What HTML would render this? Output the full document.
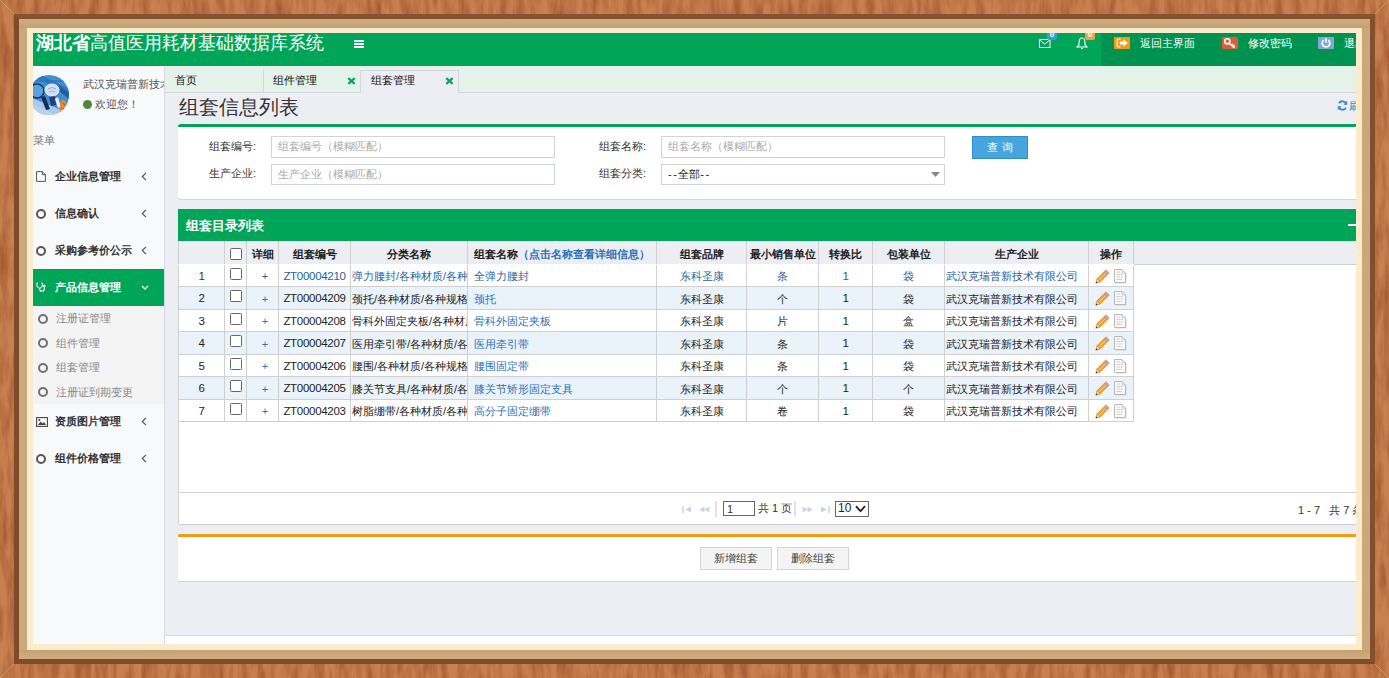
<!DOCTYPE html>
<html><head><meta charset="utf-8">
<style>
*{box-sizing:border-box;margin:0;padding:0}
html,body{width:1389px;height:678px;overflow:hidden}
body{font-family:"Liberation Sans",sans-serif;font-size:11px;color:#333;position:relative;background:#b8744a;}
.wood{position:absolute;left:0;top:0;width:1389px;height:678px;background:#bd7549}
.bev{position:absolute;left:14px;top:14px;width:1361px;height:650px;background:#88532f;}
.bev:before{content:"";position:absolute;left:0;top:0;right:0;bottom:0;
border-top:5px solid #87522f;border-left:5px solid #7f4b2a;border-right:5px solid #82502d;border-bottom:5px solid #804d2b}
.tan{position:absolute;left:19px;top:19px;width:1351px;height:640px;background:#cba87b;}
.tan:before{content:"";position:absolute;left:0;top:0;width:100%;height:9px;background:linear-gradient(#cfad80,#c4a274)}
.tan:after{content:"";position:absolute;left:0;bottom:0;width:100%;height:9px;background:linear-gradient(#c4a274,#cfae82)}
.cream{position:absolute;left:27px;top:28px;width:1335px;height:622px;background:#f9ebcc;}
.app{position:absolute;left:33px;top:33px;width:1323px;height:611px;overflow:hidden;background:#eceef3}
.abs{position:absolute}
.hdtxt{position:absolute;color:#fff;font-size:11px;line-height:13px;white-space:nowrap;margin-top:1px}
.mi{position:absolute;left:0;width:131px;height:37px;line-height:37px;white-space:nowrap;color:#333}
.mi b{position:absolute;left:22px;top:0;font-size:11px}
.mi .chev{position:absolute;left:108px;top:0;font-style:normal;font-size:13px;color:#555}
.mi.act{background:#00a557;color:#fff}
.mi.act .chev{color:#fff}
.ic{position:absolute;left:4px;top:13px;width:10px;height:11px}
.circ{left:3px;top:14px;width:10px;height:10px;border:2px solid #555;border-radius:50%}
.smi{position:absolute;left:0;width:131px;height:24.5px;line-height:24.5px;white-space:nowrap;color:#888;font-size:11px;padding-left:23px}
.smi .sc{position:absolute;left:5px;top:7.5px;width:10px;height:10px;border:2px solid #707070;border-radius:50%}
.tab{position:absolute;top:36px;height:22px;line-height:22px;font-size:11px;color:#111;white-space:nowrap}
.tx{position:absolute;top:0;width:8px;height:22px}
.lbl{position:absolute;font-size:11px;color:#333;line-height:13px;white-space:nowrap}
.inp{position:absolute;height:22px;border:1px solid #cfd4dc;background:#fff;font-size:11px;color:#aaa;line-height:20px;padding-left:6px;white-space:nowrap}

.grid{border-collapse:collapse;table-layout:fixed;font-size:11px;color:#222}
.grid td{border:1px solid #d0d0d0;height:22px;padding:1px 5px 0 5px;white-space:nowrap;overflow:hidden;position:relative;line-height:20px}
.grid tr.th td{height:23px;font-weight:bold;background:#eceef3;border-top:none;border-bottom:1px solid #fff;color:#222;padding-top:3px;box-shadow:inset 0 1px 0 #fbf7fb}
.grid td.c{text-align:center;padding-left:0;padding-right:0}
.grid td.l2{padding-left:1px;padding-right:0}
.grid td.lk0{padding-left:6px}
.grid tr.alt td{background:#eaf2fa;height:23px}
.grid td.lk{color:#2d72b8;padding-left:6px}
.grid tr.hov td{color:#1f5f9f}
.grid tr.hov td.dk{color:#333}
.grid td.lat{font-size:11.5px;letter-spacing:-0.3px;padding-top:0}
.grid td.plus{color:#2d72b8;font-size:11px;padding-left:5px}
.cb{position:absolute;left:5px;top:3px;width:12px;height:12px;border:1.5px solid #666;background:#fff;border-radius:1.5px}
.btn{width:72px;height:23px;border:1px solid #d5d5d5;background:#f4f4f4;color:#444;font-size:11px;line-height:21px;text-align:center;white-space:nowrap}
</style></head>
<body>
<svg class="wood" width="1389" height="678" viewBox="0 0 1389 678"><filter id="wf" x="0" y="0" width="100%" height="100%" color-interpolation-filters="sRGB"><feTurbulence type="fractalNoise" baseFrequency="0.12 0.025" numOctaves="4" seed="3"/><feColorMatrix type="matrix" values="0 0 0 0 0.6  0 0 0 0 0.3  0 0 0 0 0.14  1.5 0 0 0 -0.55"/></filter><rect width="1389" height="678" fill="#c78050"/><rect width="1389" height="678" filter="url(#wf)"/><path d="M0 0 L14 14 M1389 0 L1375 14 M0 678 L14 664 M1389 678 L1375 664" stroke="#e0a878" stroke-width="1" opacity="0.6"/></svg>
<div class="bev"></div>
<div class="tan"></div>
<div class="cream"></div>
<div class="app">
 <!-- header -->
 <div class="abs" style="left:0;top:0;width:1323px;height:33px;background:#00a557"></div>
 <div class="abs" style="left:1068px;top:0;width:255px;height:33px;background:#00934f"></div>
 <div class="abs" style="left:3px;top:0px;height:33px;line-height:20px;font-size:18px;color:#fff;white-space:nowrap"><b>湖北省</b>高值医用耗材基础数据库系统</div>
 <div class="abs" style="left:321px;top:7px;width:10px;height:2px;background:#fff;box-shadow:0 3px 0 #fff,0 6px 0 #fff"></div>
 <svg class="abs" style="left:1005px;top:5px" width="14" height="12" viewBox="0 0 14 12"><rect x="1.5" y="1.5" width="10.5" height="8" fill="none" stroke="#fff" stroke-width="1"/><path d="M1.8 2 L6.75 6.2 L11.7 2" fill="none" stroke="#fff" stroke-width="1"/></svg>
 <div class="abs" style="left:1014px;top:-2px;width:10px;height:9px;background:#3c9ad7;border-radius:2px;color:#fff;font-size:8px;line-height:8px;text-align:center;font-weight:bold">0</div>
 <svg class="abs" style="left:1043px;top:4px" width="12" height="13" viewBox="0 0 12 13"><path d="M6 1 C3.5 1 3 3.5 3 6 L3 8 L1 10 L11 10 L9 8 L9 6 C9 3.5 8.5 1 6 1 Z" fill="none" stroke="#fff" stroke-width="1.1"/><path d="M4.8 11 L6 12.4 L7.2 11Z" fill="#fff"/></svg>
 <div class="abs" style="left:1052px;top:-2px;width:10px;height:9px;background:#e8a744;border-radius:2px;color:#fff;font-size:8px;line-height:8px;text-align:center;font-weight:bold">0</div>
 <div class="abs" style="left:1081px;top:4px;width:16px;height:12px;background:#f39c12;border-radius:1px"><svg class="abs" style="left:2px;top:1px" width="13" height="10" viewBox="0 0 13 10"><path d="M4.5 1.2 H2.6 C1.6 1.2 1.2 1.8 1.2 2.6 V7.4 C1.2 8.2 1.6 8.8 2.6 8.8 H4.5" fill="none" stroke="#eee" stroke-width="1.3"/><path d="M3.8 3.6 H7.3 V1.2 L11.8 5 L7.3 8.8 V6.4 H3.8Z" fill="#fff"/></svg></div>
 <div class="hdtxt" style="left:1107px;top:3px">返回主界面</div>
 <div class="abs" style="left:1189px;top:4px;width:16px;height:12px;background:#d9603b;border-radius:1px"><svg class="abs" style="left:1px;top:0px" width="14" height="12" viewBox="0 0 14 12"><circle cx="4.3" cy="4.3" r="2.6" fill="none" stroke="#fff" stroke-width="1.6"/><path d="M6.2 6.2 L11.5 11 M8.6 8.4 L10 7 M10.2 9.8 L11.6 8.4" fill="none" stroke="#fff" stroke-width="1.5"/><path d="M10 8 L12 10" stroke="#f3d46a" stroke-width="1"/></svg></div>
 <div class="hdtxt" style="left:1215px;top:3px">修改密码</div>
 <div class="abs" style="left:1285px;top:4px;width:16px;height:12px;background:#86a8d6;border-radius:1px"><svg class="abs" style="left:2px;top:0px" width="12" height="12" viewBox="0 0 12 12"><path d="M3.6 3.2 A3.8 3.8 0 1 0 8.4 3.2" fill="none" stroke="#fff" stroke-width="1.7"/><path d="M6 1.2 V5.6" stroke="#fff" stroke-width="1.7"/></svg></div>
 <div class="hdtxt" style="left:1311px;top:3px">退出</div>

 <!-- sidebar -->
 <div class="abs" style="left:0;top:33px;width:132px;height:578px;background:#f8f9fb;border-right:1px solid #d5d9e2"></div>
 <svg class="abs" style="left:-4px;top:42px" width="40" height="40" viewBox="0 0 40 40"><defs><clipPath id="avc"><circle cx="20" cy="20" r="20"/></clipPath></defs><g clip-path="url(#avc)">
 <rect width="40" height="40" fill="#3f8fd2"/>
 <path d="M0 22 L40 38 L40 40 L0 40Z" fill="#a9c9ea"/>
 <path d="M0 28 L28 40 L0 40Z" fill="#b8d3ee"/>
 <path d="M12 0 L40 14 L40 22 L22 10 L8 4Z" fill="#2f78bf"/>
 <path d="M30 10 L40 18 L40 24 L30 16Z" fill="#1f5f9e"/>
 <circle cx="8" cy="16" r="7" fill="#5aa2dc" stroke="#173a66" stroke-width="1.5"/>
 <path d="M6 6 L40 6" stroke="#2c6fb1" stroke-width="1"/>
 <ellipse cx="23" cy="15" rx="7" ry="6" fill="#cfe0f2" stroke="#eef5fb" stroke-width="1"/>
 <path d="M19 14 Q23 11 27 14 M20 17 Q23 15 26 17" stroke="#8fb4dc" stroke-width="1" fill="none"/>
 <path d="M12 22 L16 21 L21 34 L17 35Z" fill="#1b2a4d"/>
 <path d="M20 22 L26 21 L27 30 L22 31Z" fill="#2a3d78"/>
 <path d="M26 24 L29 22 L32 32 L29 33Z" fill="#e6eef8"/>
 <path d="M33 25 Q38 24 37 32 Q35 38 31 37 Q30 30 33 25Z" fill="#e88b2e"/>
 <path d="M34 28 L36 30 M33 33 L35 34" stroke="#d0502a" stroke-width="1.2"/>
</g></svg>
 <div class="abs" style="left:0;top:33px;width:131px;height:100px;overflow:hidden">
  <div class="abs" style="left:50px;top:12px;font-size:11px;color:#555;white-space:nowrap;line-height:13px">武汉克瑞普新技术有限公司</div>
 </div>
 <div class="abs" style="left:50px;top:67px;width:9px;height:9px;border-radius:50%;background:#4b8a3c"></div>
 <div class="abs" style="left:62px;top:65px;font-size:11px;color:#555;white-space:nowrap;line-height:13px">欢迎您！</div>
 <div class="abs" style="left:0;top:101px;font-size:11px;color:#777;line-height:13px">菜单</div>

 <div class="mi" style="top:125px"><svg class="ic" style="left:3px;top:12.5px" viewBox="0 0 10 11"><path d="M0.6 0.6 H6.3 L9.4 3.7 V10.4 H0.6 Z M6.3 0.6 V3.7 H9.4" fill="none" stroke="#555" stroke-width="1"/></svg><b>企业信息管理</b><svg class="abs" style="left:108px;top:14px" width="6" height="9" viewBox="0 0 6 9"><path d="M5 0.8 L1.3 4.5 L5 8.2" fill="none" stroke="#555" stroke-width="1.2"/></svg></div>
 <div class="mi" style="top:162px"><span class="ic circ"></span><b>信息确认</b><svg class="abs" style="left:108px;top:14px" width="6" height="9" viewBox="0 0 6 9"><path d="M5 0.8 L1.3 4.5 L5 8.2" fill="none" stroke="#555" stroke-width="1.2"/></svg></div>
 <div class="mi" style="top:199px"><span class="ic circ"></span><b>采购参考价公示</b><svg class="abs" style="left:108px;top:14px" width="6" height="9" viewBox="0 0 6 9"><path d="M5 0.8 L1.3 4.5 L5 8.2" fill="none" stroke="#555" stroke-width="1.2"/></svg></div>
 <div class="mi act" style="top:236px"><svg class="ic" style="left:3px;top:13px;width:10px;height:10px" viewBox="0 0 10 10"><path d="M1.8 0.7 Q0.5 1 0.7 3 Q1.1 5.6 3.6 6.4 Q6.1 5.6 6.5 3 Q6.7 1 5.4 0.7" fill="none" stroke="#fff" stroke-width="1.1"/><path d="M3.6 6.4 Q3.7 9.4 6 9.4 Q8.3 9.4 8.3 6.6 V5" fill="none" stroke="#fff" stroke-width="1.1"/><circle cx="8.3" cy="4" r="1.2" fill="#fff"/></svg><b>产品信息管理</b><svg class="abs" style="left:108px;top:16px" width="8" height="6" viewBox="0 0 8 6"><path d="M1 1 L4 4 L7 1" fill="none" stroke="#fff" stroke-width="1.3"/></svg></div>
 <div class="abs" style="left:0;top:273px;width:131px;height:98px;background:#f4f4f5"></div>
 <div class="smi" style="top:273px"><span class="sc"></span>注册证管理</div>
 <div class="smi" style="top:297.5px"><span class="sc"></span>组件管理</div>
 <div class="smi" style="top:322px"><span class="sc"></span>组套管理</div>
 <div class="smi" style="top:346.5px"><span class="sc"></span>注册证到期变更</div>
 <div class="mi" style="top:370px"><svg class="ic" style="width:12px;height:10px;top:14px;left:3px" viewBox="0 0 12 10"><rect x="0.6" y="0.6" width="10.8" height="8.8" fill="none" stroke="#444" stroke-width="1.1"/><path d="M2 8 L4.5 4.5 L6.5 6.5 L8 5 L10 8 Z" fill="#444"/><circle cx="3.3" cy="3" r="1" fill="#444"/></svg><b>资质图片管理</b><svg class="abs" style="left:108px;top:14px" width="6" height="9" viewBox="0 0 6 9"><path d="M5 0.8 L1.3 4.5 L5 8.2" fill="none" stroke="#555" stroke-width="1.2"/></svg></div>
 <div class="mi" style="top:407px"><span class="ic circ"></span><b>组件价格管理</b><svg class="abs" style="left:108px;top:14px" width="6" height="9" viewBox="0 0 6 9"><path d="M5 0.8 L1.3 4.5 L5 8.2" fill="none" stroke="#555" stroke-width="1.2"/></svg></div>

 <!-- tabs -->
 <div class="abs" style="left:132px;top:33px;width:1191px;height:27px;background:#e5f2ea;border-bottom:1px solid #d3d8df"></div>
 <div class="abs" style="left:230px;top:37px;width:1px;height:22px;background:#d3d8df"></div>
 <div class="abs" style="left:327px;top:37px;width:99px;height:23px;background:#eceef3;border:1px solid #d3d8df;border-bottom:none"></div>
 <div class="tab" style="left:142px">首页</div>
 <div class="tab" style="left:240px">组件管理</div>
 <svg class="abs" style="left:314px;top:44px" width="9" height="8" viewBox="0 0 9 8"><path d="M1.3 1.1 L7.7 6.9 M7.7 1.1 L1.3 6.9" stroke="#0aa55a" stroke-width="2.2"/></svg>
 <div class="tab" style="left:338px">组套管理</div>
 <svg class="abs" style="left:412px;top:44px" width="9" height="8" viewBox="0 0 9 8"><path d="M1.3 1.1 L7.7 6.9 M7.7 1.1 L1.3 6.9" stroke="#0aa55a" stroke-width="2.2"/></svg>

 <!-- title -->
 <div class="abs" style="left:146px;top:61.5px;font-size:20px;line-height:24px;color:#333;white-space:nowrap">组套信息列表</div>
 <svg class="abs" style="left:1304px;top:67px" width="11" height="11" viewBox="0 0 11 11"><path d="M9.3 4.2 A4 4 0 0 0 2 3.2 M1.7 6.8 A4 4 0 0 0 9 7.8" fill="none" stroke="#3c8dbc" stroke-width="1.8"/><path d="M10.2 0.8 V4.8 H6.4Z M0.8 10.2 V6.2 H4.6Z" fill="#3c8dbc"/></svg>
 <div class="abs" style="left:1316px;top:67px;font-size:11px;line-height:13px;color:#3c8dbc;white-space:nowrap">刷新</div>

 <!-- search box -->
 <div class="abs" style="left:145px;top:91px;width:1200px;height:75px;background:#fff;border-top:3px solid #00a557;border-radius:3px;box-shadow:0 1px 1px rgba(0,0,0,0.12)"></div>
 <div class="lbl" style="left:176px;top:107px">组套编号:</div>
 <div class="inp" style="left:238px;top:103px;width:284px;line-height:19px">组套编号（模糊匹配）</div>
 <div class="lbl" style="left:176px;top:134px">生产企业:</div>
 <div class="inp" style="left:238px;top:131px;width:284px;height:21px;line-height:18px">生产企业（模糊匹配）</div>
 <div class="lbl" style="left:566px;top:107px">组套名称:</div>
 <div class="inp" style="left:628px;top:103px;width:284px;height:22px;line-height:19px">组套名称（模糊匹配）</div>
 <div class="lbl" style="left:566px;top:134px">组套分类:</div>
 <div class="inp" style="left:628px;top:131px;width:284px;height:21px;line-height:18px;color:#222"><span style="letter-spacing:1.5px">--</span>全部<span style="letter-spacing:1.5px">--</span></div>
 <svg class="abs" style="left:898px;top:139px" width="9" height="6" viewBox="0 0 9 6"><path d="M0 0 H9 L4.5 5Z" fill="#888"/></svg>
 <div class="abs" style="left:939px;top:103px;width:56px;height:23px;background:#45a5dc;border:1px solid #2f8dcb;color:#fff;font-size:11px;line-height:20px;text-align:center;white-space:nowrap">查 询</div>

 <!-- table panel -->
 <div class="abs" style="left:145px;top:176px;width:1200px;height:315px;background:#fff;border-left:1px solid #d2d2d2"></div>
 <div class="abs" style="left:145px;top:176px;width:1200px;height:32px;background:#00a557"></div>
 <div class="abs" style="left:153px;top:185px;font-size:13px;line-height:16px;color:#fff;font-weight:bold;white-space:nowrap">组套目录列表</div>
 <div class="abs" style="left:1315px;top:191px;width:9px;height:2px;background:#fff"></div>
 <div class="abs" style="left:146px;top:208px;width:1200px;height:24px;background:#eceef3;border-bottom:1px solid #cfcfcf"></div>

 <table class="grid" style="position:absolute;left:145px;top:208px;width:955px">
 <colgroup><col style="width:46px"><col style="width:22px"><col style="width:32px"><col style="width:72px"><col style="width:117px"><col style="width:189px"><col style="width:90px"><col style="width:72px"><col style="width:54px"><col style="width:72px"><col style="width:144px"><col style="width:45px"></colgroup>
 <tr class="th"><td></td><td class="c"><span class="cb" style="top:7px"></span></td><td class="c">详细</td><td class="c">组套编号</td><td class="c">分类名称</td><td class="lk0">组套名称<span style="color:#2d72b8">（点击名称查看详细信息）</span></td><td class="c">组套品牌</td><td class="c">最小销售单位</td><td class="c">转换比</td><td class="c">包装单位</td><td class="c">生产企业</td><td class="c">操作</td></tr>
 <tr class="hov"><td class="c dk lat">1</td><td class="c"><span class="cb"></span></td><td class="c plus">+</td><td class="c lat">ZT00004210</td><td class="l2">弹力腰封/各种材质/各种规格</td><td class="lk">全弹力腰封</td><td class="c">东科圣康</td><td class="c">条</td><td class="c lat">1</td><td class="c">袋</td><td class="l2">武汉克瑞普新技术有限公司</td><td class="op"><svg width="15" height="15" viewBox="0 0 15 15" style="position:absolute;left:6px;top:4px"><path d="M11 0.8 L14.2 4 L5 13.2 L1.8 10Z" fill="#f2a635" stroke="#d08418" stroke-width="0.7"/><path d="M3.4 11.6 L12.6 2.4" stroke="#f8c870" stroke-width="0.9"/><path d="M11 0.8 L14.2 4 L12.9 5.3 L9.7 2.1Z" fill="#e58fbf"/><path d="M9.7 2.1 L12.9 5.3 L12 6.2 L8.8 3Z" fill="#a9a9a9"/><path d="M1.8 10 L5 13.2 L0.8 14.2Z" fill="#f3d9a8" stroke="#b57c30" stroke-width="0.5"/><path d="M0.8 14.2 L1.3 12.3 L2.7 13.7Z" fill="#333"/></svg><svg width="13" height="15" viewBox="0 0 13 15" style="position:absolute;left:25px;top:4px"><path d="M1.5 1.5 H9 L12.5 5 V14.5 H1.5Z" fill="#d8d8d8"/><path d="M0.5 0.5 H8 L11.5 4 V13.5 H0.5Z" fill="#fbfbfb" stroke="#b8b8b8" stroke-width="1"/><path d="M8 0.5 V4 H11.5" fill="none" stroke="#c0c0c0" stroke-width="0.8"/><path d="M2.5 3 H6 M2.5 5.5 H9 M2.5 8 H9 M2.5 10.5 H8" stroke="#bcbcbc" stroke-width="0.9" stroke-dasharray="1.6 0.7"/></svg></td></tr><tr class="alt"><td class="c dk lat">2</td><td class="c"><span class="cb"></span></td><td class="c plus">+</td><td class="c lat">ZT00004209</td><td class="l2">颈托/各种材质/各种规格</td><td class="lk">颈托</td><td class="c">东科圣康</td><td class="c">个</td><td class="c lat">1</td><td class="c">袋</td><td class="l2">武汉克瑞普新技术有限公司</td><td class="op"><svg width="15" height="15" viewBox="0 0 15 15" style="position:absolute;left:6px;top:4px"><path d="M11 0.8 L14.2 4 L5 13.2 L1.8 10Z" fill="#f2a635" stroke="#d08418" stroke-width="0.7"/><path d="M3.4 11.6 L12.6 2.4" stroke="#f8c870" stroke-width="0.9"/><path d="M11 0.8 L14.2 4 L12.9 5.3 L9.7 2.1Z" fill="#e58fbf"/><path d="M9.7 2.1 L12.9 5.3 L12 6.2 L8.8 3Z" fill="#a9a9a9"/><path d="M1.8 10 L5 13.2 L0.8 14.2Z" fill="#f3d9a8" stroke="#b57c30" stroke-width="0.5"/><path d="M0.8 14.2 L1.3 12.3 L2.7 13.7Z" fill="#333"/></svg><svg width="13" height="15" viewBox="0 0 13 15" style="position:absolute;left:25px;top:4px"><path d="M1.5 1.5 H9 L12.5 5 V14.5 H1.5Z" fill="#d8d8d8"/><path d="M0.5 0.5 H8 L11.5 4 V13.5 H0.5Z" fill="#fbfbfb" stroke="#b8b8b8" stroke-width="1"/><path d="M8 0.5 V4 H11.5" fill="none" stroke="#c0c0c0" stroke-width="0.8"/><path d="M2.5 3 H6 M2.5 5.5 H9 M2.5 8 H9 M2.5 10.5 H8" stroke="#bcbcbc" stroke-width="0.9" stroke-dasharray="1.6 0.7"/></svg></td></tr><tr class=""><td class="c dk lat">3</td><td class="c"><span class="cb"></span></td><td class="c plus">+</td><td class="c lat">ZT00004208</td><td class="l2">骨科外固定夹板/各种材质/各种规格</td><td class="lk">骨科外固定夹板</td><td class="c">东科圣康</td><td class="c">片</td><td class="c lat">1</td><td class="c">盒</td><td class="l2">武汉克瑞普新技术有限公司</td><td class="op"><svg width="15" height="15" viewBox="0 0 15 15" style="position:absolute;left:6px;top:4px"><path d="M11 0.8 L14.2 4 L5 13.2 L1.8 10Z" fill="#f2a635" stroke="#d08418" stroke-width="0.7"/><path d="M3.4 11.6 L12.6 2.4" stroke="#f8c870" stroke-width="0.9"/><path d="M11 0.8 L14.2 4 L12.9 5.3 L9.7 2.1Z" fill="#e58fbf"/><path d="M9.7 2.1 L12.9 5.3 L12 6.2 L8.8 3Z" fill="#a9a9a9"/><path d="M1.8 10 L5 13.2 L0.8 14.2Z" fill="#f3d9a8" stroke="#b57c30" stroke-width="0.5"/><path d="M0.8 14.2 L1.3 12.3 L2.7 13.7Z" fill="#333"/></svg><svg width="13" height="15" viewBox="0 0 13 15" style="position:absolute;left:25px;top:4px"><path d="M1.5 1.5 H9 L12.5 5 V14.5 H1.5Z" fill="#d8d8d8"/><path d="M0.5 0.5 H8 L11.5 4 V13.5 H0.5Z" fill="#fbfbfb" stroke="#b8b8b8" stroke-width="1"/><path d="M8 0.5 V4 H11.5" fill="none" stroke="#c0c0c0" stroke-width="0.8"/><path d="M2.5 3 H6 M2.5 5.5 H9 M2.5 8 H9 M2.5 10.5 H8" stroke="#bcbcbc" stroke-width="0.9" stroke-dasharray="1.6 0.7"/></svg></td></tr><tr class="alt"><td class="c dk lat">4</td><td class="c"><span class="cb"></span></td><td class="c plus">+</td><td class="c lat">ZT00004207</td><td class="l2">医用牵引带/各种材质/各种规格</td><td class="lk">医用牵引带</td><td class="c">东科圣康</td><td class="c">条</td><td class="c lat">1</td><td class="c">袋</td><td class="l2">武汉克瑞普新技术有限公司</td><td class="op"><svg width="15" height="15" viewBox="0 0 15 15" style="position:absolute;left:6px;top:4px"><path d="M11 0.8 L14.2 4 L5 13.2 L1.8 10Z" fill="#f2a635" stroke="#d08418" stroke-width="0.7"/><path d="M3.4 11.6 L12.6 2.4" stroke="#f8c870" stroke-width="0.9"/><path d="M11 0.8 L14.2 4 L12.9 5.3 L9.7 2.1Z" fill="#e58fbf"/><path d="M9.7 2.1 L12.9 5.3 L12 6.2 L8.8 3Z" fill="#a9a9a9"/><path d="M1.8 10 L5 13.2 L0.8 14.2Z" fill="#f3d9a8" stroke="#b57c30" stroke-width="0.5"/><path d="M0.8 14.2 L1.3 12.3 L2.7 13.7Z" fill="#333"/></svg><svg width="13" height="15" viewBox="0 0 13 15" style="position:absolute;left:25px;top:4px"><path d="M1.5 1.5 H9 L12.5 5 V14.5 H1.5Z" fill="#d8d8d8"/><path d="M0.5 0.5 H8 L11.5 4 V13.5 H0.5Z" fill="#fbfbfb" stroke="#b8b8b8" stroke-width="1"/><path d="M8 0.5 V4 H11.5" fill="none" stroke="#c0c0c0" stroke-width="0.8"/><path d="M2.5 3 H6 M2.5 5.5 H9 M2.5 8 H9 M2.5 10.5 H8" stroke="#bcbcbc" stroke-width="0.9" stroke-dasharray="1.6 0.7"/></svg></td></tr><tr class=""><td class="c dk lat">5</td><td class="c"><span class="cb"></span></td><td class="c plus">+</td><td class="c lat">ZT00004206</td><td class="l2">腰围/各种材质/各种规格</td><td class="lk">腰围固定带</td><td class="c">东科圣康</td><td class="c">条</td><td class="c lat">1</td><td class="c">袋</td><td class="l2">武汉克瑞普新技术有限公司</td><td class="op"><svg width="15" height="15" viewBox="0 0 15 15" style="position:absolute;left:6px;top:4px"><path d="M11 0.8 L14.2 4 L5 13.2 L1.8 10Z" fill="#f2a635" stroke="#d08418" stroke-width="0.7"/><path d="M3.4 11.6 L12.6 2.4" stroke="#f8c870" stroke-width="0.9"/><path d="M11 0.8 L14.2 4 L12.9 5.3 L9.7 2.1Z" fill="#e58fbf"/><path d="M9.7 2.1 L12.9 5.3 L12 6.2 L8.8 3Z" fill="#a9a9a9"/><path d="M1.8 10 L5 13.2 L0.8 14.2Z" fill="#f3d9a8" stroke="#b57c30" stroke-width="0.5"/><path d="M0.8 14.2 L1.3 12.3 L2.7 13.7Z" fill="#333"/></svg><svg width="13" height="15" viewBox="0 0 13 15" style="position:absolute;left:25px;top:4px"><path d="M1.5 1.5 H9 L12.5 5 V14.5 H1.5Z" fill="#d8d8d8"/><path d="M0.5 0.5 H8 L11.5 4 V13.5 H0.5Z" fill="#fbfbfb" stroke="#b8b8b8" stroke-width="1"/><path d="M8 0.5 V4 H11.5" fill="none" stroke="#c0c0c0" stroke-width="0.8"/><path d="M2.5 3 H6 M2.5 5.5 H9 M2.5 8 H9 M2.5 10.5 H8" stroke="#bcbcbc" stroke-width="0.9" stroke-dasharray="1.6 0.7"/></svg></td></tr><tr class="alt"><td class="c dk lat">6</td><td class="c"><span class="cb"></span></td><td class="c plus">+</td><td class="c lat">ZT00004205</td><td class="l2">膝关节支具/各种材质/各种规格</td><td class="lk">膝关节矫形固定支具</td><td class="c">东科圣康</td><td class="c">个</td><td class="c lat">1</td><td class="c">个</td><td class="l2">武汉克瑞普新技术有限公司</td><td class="op"><svg width="15" height="15" viewBox="0 0 15 15" style="position:absolute;left:6px;top:4px"><path d="M11 0.8 L14.2 4 L5 13.2 L1.8 10Z" fill="#f2a635" stroke="#d08418" stroke-width="0.7"/><path d="M3.4 11.6 L12.6 2.4" stroke="#f8c870" stroke-width="0.9"/><path d="M11 0.8 L14.2 4 L12.9 5.3 L9.7 2.1Z" fill="#e58fbf"/><path d="M9.7 2.1 L12.9 5.3 L12 6.2 L8.8 3Z" fill="#a9a9a9"/><path d="M1.8 10 L5 13.2 L0.8 14.2Z" fill="#f3d9a8" stroke="#b57c30" stroke-width="0.5"/><path d="M0.8 14.2 L1.3 12.3 L2.7 13.7Z" fill="#333"/></svg><svg width="13" height="15" viewBox="0 0 13 15" style="position:absolute;left:25px;top:4px"><path d="M1.5 1.5 H9 L12.5 5 V14.5 H1.5Z" fill="#d8d8d8"/><path d="M0.5 0.5 H8 L11.5 4 V13.5 H0.5Z" fill="#fbfbfb" stroke="#b8b8b8" stroke-width="1"/><path d="M8 0.5 V4 H11.5" fill="none" stroke="#c0c0c0" stroke-width="0.8"/><path d="M2.5 3 H6 M2.5 5.5 H9 M2.5 8 H9 M2.5 10.5 H8" stroke="#bcbcbc" stroke-width="0.9" stroke-dasharray="1.6 0.7"/></svg></td></tr><tr class=""><td class="c dk lat">7</td><td class="c"><span class="cb"></span></td><td class="c plus">+</td><td class="c lat">ZT00004203</td><td class="l2">树脂绷带/各种材质/各种规格</td><td class="lk">高分子固定绷带</td><td class="c">东科圣康</td><td class="c">卷</td><td class="c lat">1</td><td class="c">袋</td><td class="l2">武汉克瑞普新技术有限公司</td><td class="op"><svg width="15" height="15" viewBox="0 0 15 15" style="position:absolute;left:6px;top:4px"><path d="M11 0.8 L14.2 4 L5 13.2 L1.8 10Z" fill="#f2a635" stroke="#d08418" stroke-width="0.7"/><path d="M3.4 11.6 L12.6 2.4" stroke="#f8c870" stroke-width="0.9"/><path d="M11 0.8 L14.2 4 L12.9 5.3 L9.7 2.1Z" fill="#e58fbf"/><path d="M9.7 2.1 L12.9 5.3 L12 6.2 L8.8 3Z" fill="#a9a9a9"/><path d="M1.8 10 L5 13.2 L0.8 14.2Z" fill="#f3d9a8" stroke="#b57c30" stroke-width="0.5"/><path d="M0.8 14.2 L1.3 12.3 L2.7 13.7Z" fill="#333"/></svg><svg width="13" height="15" viewBox="0 0 13 15" style="position:absolute;left:25px;top:4px"><path d="M1.5 1.5 H9 L12.5 5 V14.5 H1.5Z" fill="#d8d8d8"/><path d="M0.5 0.5 H8 L11.5 4 V13.5 H0.5Z" fill="#fbfbfb" stroke="#b8b8b8" stroke-width="1"/><path d="M8 0.5 V4 H11.5" fill="none" stroke="#c0c0c0" stroke-width="0.8"/><path d="M2.5 3 H6 M2.5 5.5 H9 M2.5 8 H9 M2.5 10.5 H8" stroke="#bcbcbc" stroke-width="0.9" stroke-dasharray="1.6 0.7"/></svg></td></tr>
 </table>

 <!-- pager -->
 <div class="abs" style="left:146px;top:459px;width:1200px;height:33px;border-top:1px solid #d0d0d0;border-bottom:1px solid #d0d0d0;background:#fff"></div>
 <svg class="abs" style="left:649px;top:473px" width="10" height="7" viewBox="0 0 10 7"><path d="M1 0 V7" stroke="#c9d5e3" stroke-width="1.5"/><path d="M9 0.5 L3 3.5 L9 6.5Z" fill="#c9d5e3"/></svg>
 <svg class="abs" style="left:666px;top:473px" width="11" height="7" viewBox="0 0 11 7"><path d="M5.5 0.5 L0.5 3.5 L5.5 6.5Z M10.5 0.5 L5.5 3.5 L10.5 6.5Z" fill="#c9d5e3"/></svg>
 <div class="abs" style="left:682px;top:468px;width:2px;height:16px;background:#e3e3e3"></div>
 <div class="abs" style="left:690px;top:468px;width:32px;height:15px;border:1px solid #666;background:#fff;font-size:11px;line-height:14px;padding-left:3px;color:#333">1</div>
 <div class="abs" style="left:725px;top:468px;font-size:11px;line-height:14px;color:#333;white-space:nowrap">共 1 页</div>
 <div class="abs" style="left:761px;top:468px;width:2px;height:16px;background:#e3e3e3"></div>
 <svg class="abs" style="left:769px;top:473px" width="11" height="7" viewBox="0 0 11 7"><path d="M0.5 0.5 L5.5 3.5 L0.5 6.5Z M5.5 0.5 L10.5 3.5 L5.5 6.5Z" fill="#c9d5e3"/></svg>
 <svg class="abs" style="left:787px;top:473px" width="10" height="7" viewBox="0 0 10 7"><path d="M9 0 V7" stroke="#c9d5e3" stroke-width="1.5"/><path d="M1 0.5 L7 3.5 L1 6.5Z" fill="#c9d5e3"/></svg>
 <div class="abs" style="left:802px;top:468px;width:34px;height:16px;border:1px solid #666;background:#fff;font-size:12px;line-height:12px;padding-left:2px;color:#222">10</div>
 <svg class="abs" style="left:822px;top:472px" width="11" height="8" viewBox="0 0 11 8"><path d="M1 1.2 L5.5 6.2 L10 1.2" fill="none" stroke="#222" stroke-width="1.8"/></svg>
 <div class="abs" style="left:1265px;top:471px;font-size:11px;line-height:13px;color:#333;white-space:nowrap">1 - 7 &nbsp;&nbsp;共 7 条</div>

 <!-- buttons panel -->
 <div class="abs" style="left:145px;top:501px;width:1200px;height:47px;background:#fff;border-top:3px solid #f39c12;border-radius:2px;box-shadow:0 1px 1px rgba(0,0,0,0.12)"></div>
 <div class="abs btn" style="left:667px;top:514px">新增组套</div>
 <div class="abs btn" style="left:744px;top:514px">删除组套</div>

 <!-- footer -->
 <div class="abs" style="left:132px;top:602px;width:1191px;height:9px;background:#fff;border-top:1px solid #d3d8df"></div>
</div>
</body></html>
